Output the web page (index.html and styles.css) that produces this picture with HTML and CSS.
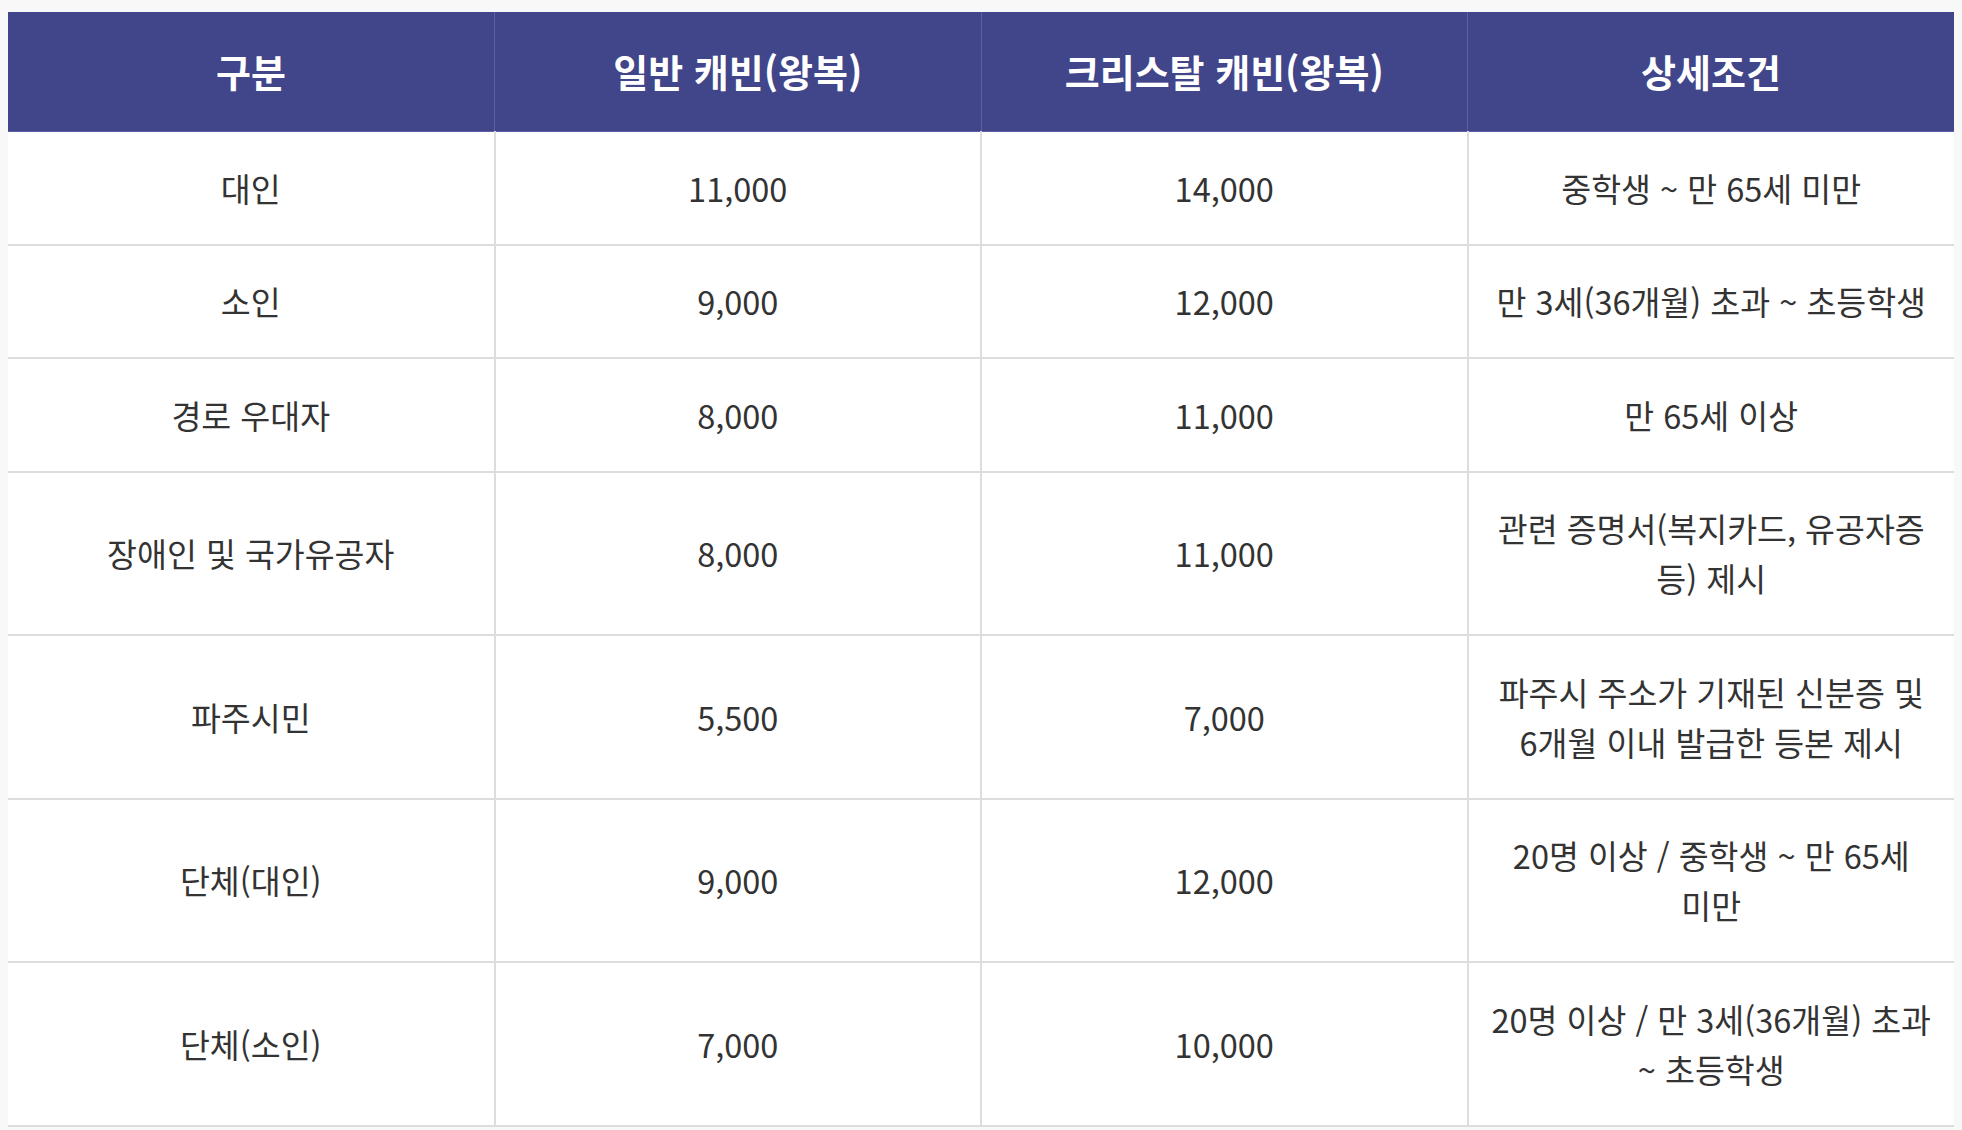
FILE: index.html
```html
<!DOCTYPE html>
<html lang="ko">
<head>
<meta charset="utf-8">
<title>요금 안내</title>
<link rel="stylesheet" href="styles.css">
</head>
<body>
<div class="wrap">
  <table class="fare">
    <thead>
      <tr>
        <th>구분</th>
        <th>일반 캐빈(왕복)</th>
        <th>크리스탈 캐빈(왕복)</th>
        <th>상세조건</th>
      </tr>
    </thead>
    <tbody>
      <tr><td>대인</td><td>11,000</td><td>14,000</td><td>중학생 ~ 만 65세 미만</td></tr>
      <tr><td>소인</td><td>9,000</td><td>12,000</td><td>만 3세(36개월) 초과 ~ 초등학생</td></tr>
      <tr><td>경로 우대자</td><td>8,000</td><td>11,000</td><td>만 65세 이상</td></tr>
      <tr><td>장애인 및 국가유공자</td><td>8,000</td><td>11,000</td><td>관련 증명서(복지카드, 유공자증 등) 제시</td></tr>
      <tr><td>파주시민</td><td>5,500</td><td>7,000</td><td>파주시 주소가 기재된 신분증 및 6개월 이내 발급한 등본 제시</td></tr>
      <tr><td>단체(대인)</td><td>9,000</td><td>12,000</td><td>20명 이상 / 중학생 ~ 만 65세 미만</td></tr>
      <tr><td>단체(소인)</td><td>7,000</td><td>10,000</td><td>20명 이상 / 만 3세(36개월) 초과 ~ 초등학생</td></tr>
    </tbody>
  </table>
</div>
</body>
</html>
```

FILE: styles.css
```css
html, body {
  background: #f8f8f8;
}
body {
  margin: 8px;
  font-family: "Noto Sans CJK KR", "Noto Sans", sans-serif;
  color: #333333;
}
.wrap {
  padding-top: 4px;
}
.fare {
  width: 1946px;
  border-collapse: collapse;
  table-layout: fixed;
  background: #ffffff;
}
.fare th {
  background: #414589;
  color: #ffffff;
  font-size: 38px;
  font-weight: 700;
  line-height: 54px;
  padding: 32px 16px 33px;
  text-align: center;
  border-bottom: 1px solid #5a5fa6;
  border-left: 1px solid #5a5fa6;
  word-break: keep-all;
}
.fare th:first-child {
  border-left: none;
}
.fare td {
  font-size: 32.5px;
  font-weight: 400;
  line-height: 50px;
  padding: 30.5px 16px 31px;
  text-align: center;
  vertical-align: middle;
  border-bottom: 2px solid #dddddd;
  border-left: 2px solid #dddddd;
  color: #333333;
  word-break: keep-all;
}
.fare td:first-child {
  border-left: none;
}
```
